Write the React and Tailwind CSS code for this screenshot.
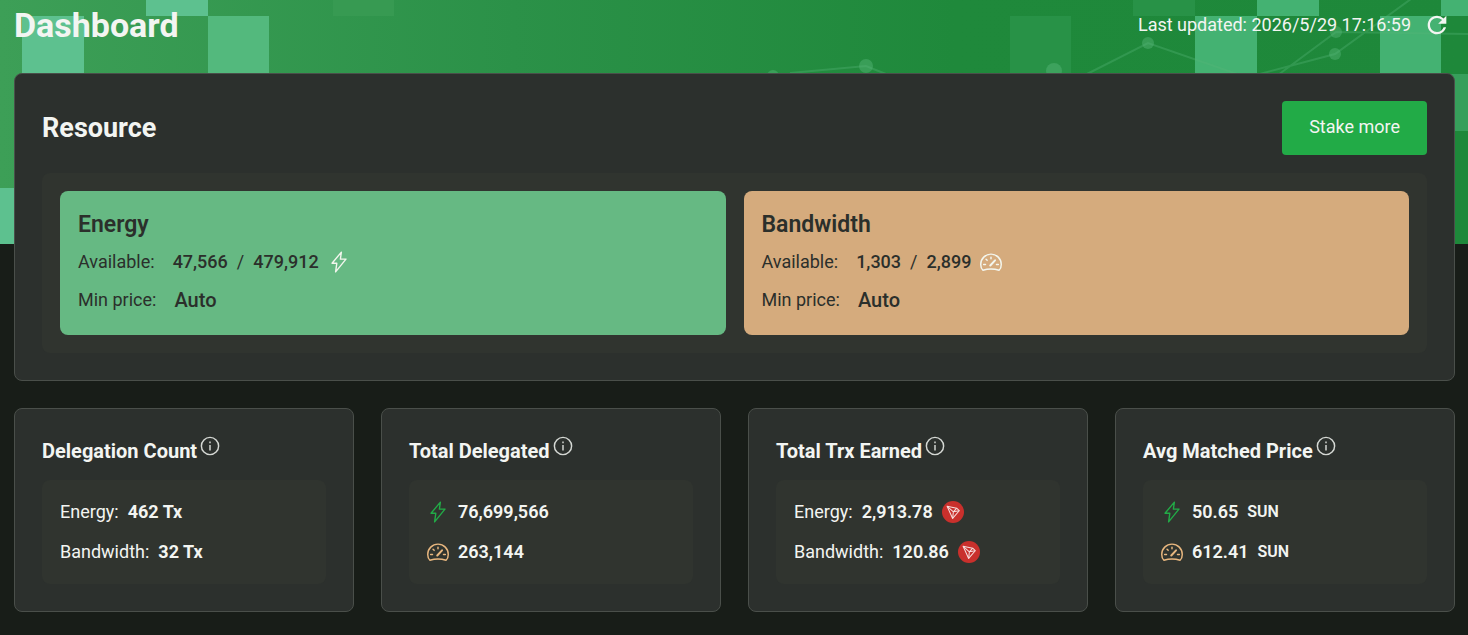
import React from "react";
import { MdRefresh } from "react-icons/md";

const BoltIcon = ({ className }) => (
  <svg viewBox="0 0 24 24" fill="none" stroke="currentColor" strokeWidth="1.5" strokeLinejoin="round" className={className}>
    <path d="M14.6 1.2 4.4 13.4h5.2l-1.3 9.4L19.6 8.9h-6.1z" />
  </svg>
);

const GaugeIcon = ({ className }) => (
  <svg viewBox="0 0 24 24" fill="none" stroke="currentColor" strokeWidth="1.6" strokeLinecap="round" strokeLinejoin="round" className={className}>
    <path d="M3.2 21C1.6 19.6.8 17.200.8 14.6a11.2 11.2 0 0 1 22.4 0c0 2.600-.8 5-2.400 6.400-5.600-1.800-12-1.800-17.600 0z" />
    <path d="M11.2 15.800 16.400 10.200" strokeWidth="2.2" />
    <path d="M12 6.800v1.600M6.600 9l1.200 1.200M4 14.800h2M18 14.800h2" />
  </svg>
);

const InfoIcon = ({ className }) => (
  <svg viewBox="0 0 24 24" fill="none" stroke="currentColor" strokeWidth="1.6" className={className}>
    <circle cx="12" cy="12" r="9.4" />
    <path d="M12 10.8v6M12 7.2V9" />
  </svg>
);

const TronIcon = ({ className }) => (
  <svg viewBox="0 0 24 24" fill="none" className={className}>
    <circle cx="12" cy="12" r="12" fill="#c9302c" />
    <g stroke="#f6dedd" strokeWidth="1.1" strokeLinejoin="round">
      <path d="M5.6 5.8 16 7.8l2.8 2.8-7.2 8.4z" />
      <path d="m5.6 5.8 6.8 6 3.6-4M12.4 11.8l6.4-1.2M12.4 11.8l-.8 7.2" />
    </g>
  </svg>
);

const Banner = () => (
  <svg
    viewBox="0 0 1468 244"
    preserveAspectRatio="xMidYMin slice"
    aria-hidden="true"
    className="absolute inset-x-0 top-0 h-61 w-full"
  >
    <defs>
      <linearGradient id="bannerFill" x1="0" x2="1" y1="0" y2="0">
        <stop offset="0" stopColor="#3d9f57" />
        <stop offset="0.35" stopColor="#2b9148" />
        <stop offset="0.65" stopColor="#1f893b" />
        <stop offset="1" stopColor="#1e883a" />
      </linearGradient>
    </defs>
    <rect width="1468" height="244" fill="url(#bannerFill)" />
    <g fill="#5dc18f">
      <rect x="22" y="16" width="62" height="58" />
      <rect x="146" y="-42" width="62" height="58" />
      <rect x="-40" y="188" width="62" height="58" />
    </g>
    <rect x="208" y="16" width="61" height="58" fill="#53b97d" />
    <rect x="333" y="-42" width="61" height="58" fill="#379a52" />
    <rect x="1010" y="16" width="61" height="58" fill="#289247" />
    <rect x="1133" y="-42" width="62" height="58" fill="#289247" />
    <g fill="#44b272">
      <rect x="1195" y="16" width="62" height="58" />
      <rect x="1257" y="-42" width="62" height="58" />
      <rect x="1380" y="16" width="61" height="58" />
      <rect x="1441" y="-42" width="62" height="58" />
    </g>
    <rect x="1441" y="74" width="62" height="57" fill="#379f5b" />
    <g stroke="#57b577" strokeOpacity="0.35" strokeWidth="2" fill="none">
      <path d="m790 73 76-7 30 12M1085 75l63-32 92 32" />
      <path d="m1256 75 79-21 76-55M1278 75l58-43 132 2" />
    </g>
    <g fill="#57b577" fillOpacity="0.45">
      <circle cx="773" cy="76" r="6" />
      <circle cx="866" cy="66" r="7" />
      <circle cx="1054" cy="71" r="8" />
      <circle cx="1148" cy="43" r="6" />
      <circle cx="1335" cy="54" r="6" />
      <circle cx="1336" cy="32" r="6" />
    </g>
  </svg>
);

const ResourceCard = ({ title, available, total, icon, className }) => (
  <div className={`rounded-lg px-[18px] py-4 text-[#2b2f2b] ${className}`}>
    <h3 className="text-[23px] leading-9 font-semibold">{title}</h3>
    <div className="flex h-[38px] items-center">
      <span>Available:</span>
      <span className="ml-[18px] font-medium">{available}</span>
      <span className="mx-[9px]">/</span>
      <span className="font-medium">{total}</span>
      <span className="ml-[9px] text-[#f3f6ee]">{icon}</span>
    </div>
    <div className="flex h-[38px] items-center">
      <span>Min price:</span>
      <span className="ml-[18px] text-xl font-medium">Auto</span>
    </div>
  </div>
);

const StatCard = ({ title, children }) => (
  <section className="rounded-lg border border-[#4a4f4a] bg-[#2c302d] p-[27px]">
    <div className="mb-3.5 flex h-[30px] items-center">
      <h2 className="text-xl font-bold">{title}</h2>
      <button type="button" aria-label={`About ${title}`} className="mb-2.5 ml-0.5 text-[#d5d8d4]">
        <InfoIcon className="size-[22px]" />
      </button>
    </div>
    <div className="rounded-lg bg-[#30342f] px-[18px] py-3">{children}</div>
  </section>
);

const StatRow = ({ children }) => (
  <div className="flex h-10 items-center gap-[9px]">{children}</div>
);

const App = () => (
  <div className="relative min-h-screen bg-[#181d18] pr-[13px] pb-6 pl-3.5 font-['Roboto',sans-serif] text-lg text-[#f3f5f2]">
    <Banner />
    <div className="relative">
      <header className="flex h-[73px] items-start justify-between">
        <h1 className="text-[34px] leading-[50px] font-bold">Dashboard</h1>
        <div className="flex h-[50px] items-center">
          <span>Last updated: 2026/5/29 17:16:59</span>
          <button type="button" aria-label="Refresh" className="mr-1 ml-3">
            <MdRefresh className="size-7" />
          </button>
        </div>
      </header>

      <section className="rounded-lg border border-[#4a4f4a] bg-[#2c302d] p-[27px]">
        <div className="mb-[18px] flex items-center justify-between">
          <h2 className="text-[27px] font-bold">Resource</h2>
          <button type="button" className="h-[54px] rounded bg-[#22ab47] px-[27px] pb-0.5">
            Stake more
          </button>
        </div>
        <div className="grid grid-cols-2 gap-[18px] rounded-lg bg-[#30342f] p-[18px]">
          <ResourceCard
            title="Energy"
            available="47,566"
            total="479,912"
            className="bg-[#66b983]"
            icon={<BoltIcon className="size-[22px]" />}
          />
          <ResourceCard
            title="Bandwidth"
            available="1,303"
            total="2,899"
            className="bg-[#d5ab7d]"
            icon={<GaugeIcon className="size-[22px]" />}
          />
        </div>
      </section>

      <div className="mt-[27px] grid grid-cols-4 gap-[27px]">
        <StatCard title="Delegation Count">
          <StatRow>
            <span>Energy:</span>
            <span className="font-bold">462 Tx</span>
          </StatRow>
          <StatRow>
            <span>Bandwidth:</span>
            <span className="font-bold">32 Tx</span>
          </StatRow>
        </StatCard>
        <StatCard title="Total Delegated">
          <StatRow>
            <BoltIcon className="size-[22px] text-[#22ab47]" />
            <span className="font-semibold">76,699,566</span>
          </StatRow>
          <StatRow>
            <GaugeIcon className="size-[22px] text-[#e8b77f]" />
            <span className="font-semibold">263,144</span>
          </StatRow>
        </StatCard>
        <StatCard title="Total Trx Earned">
          <StatRow>
            <span>Energy:</span>
            <span className="font-semibold">2,913.78</span>
            <TronIcon className="size-[22px]" />
          </StatRow>
          <StatRow>
            <span>Bandwidth:</span>
            <span className="font-semibold">120.86</span>
            <TronIcon className="size-[22px]" />
          </StatRow>
        </StatCard>
        <StatCard title="Avg Matched Price">
          <StatRow>
            <BoltIcon className="size-[22px] text-[#22ab47]" />
            <span className="font-semibold">50.65</span>
            <span className="text-base font-semibold">SUN</span>
          </StatRow>
          <StatRow>
            <GaugeIcon className="size-[22px] text-[#e8b77f]" />
            <span className="font-semibold">612.41</span>
            <span className="text-base font-semibold">SUN</span>
          </StatRow>
        </StatCard>
      </div>
    </div>
  </div>
);

export default App;
